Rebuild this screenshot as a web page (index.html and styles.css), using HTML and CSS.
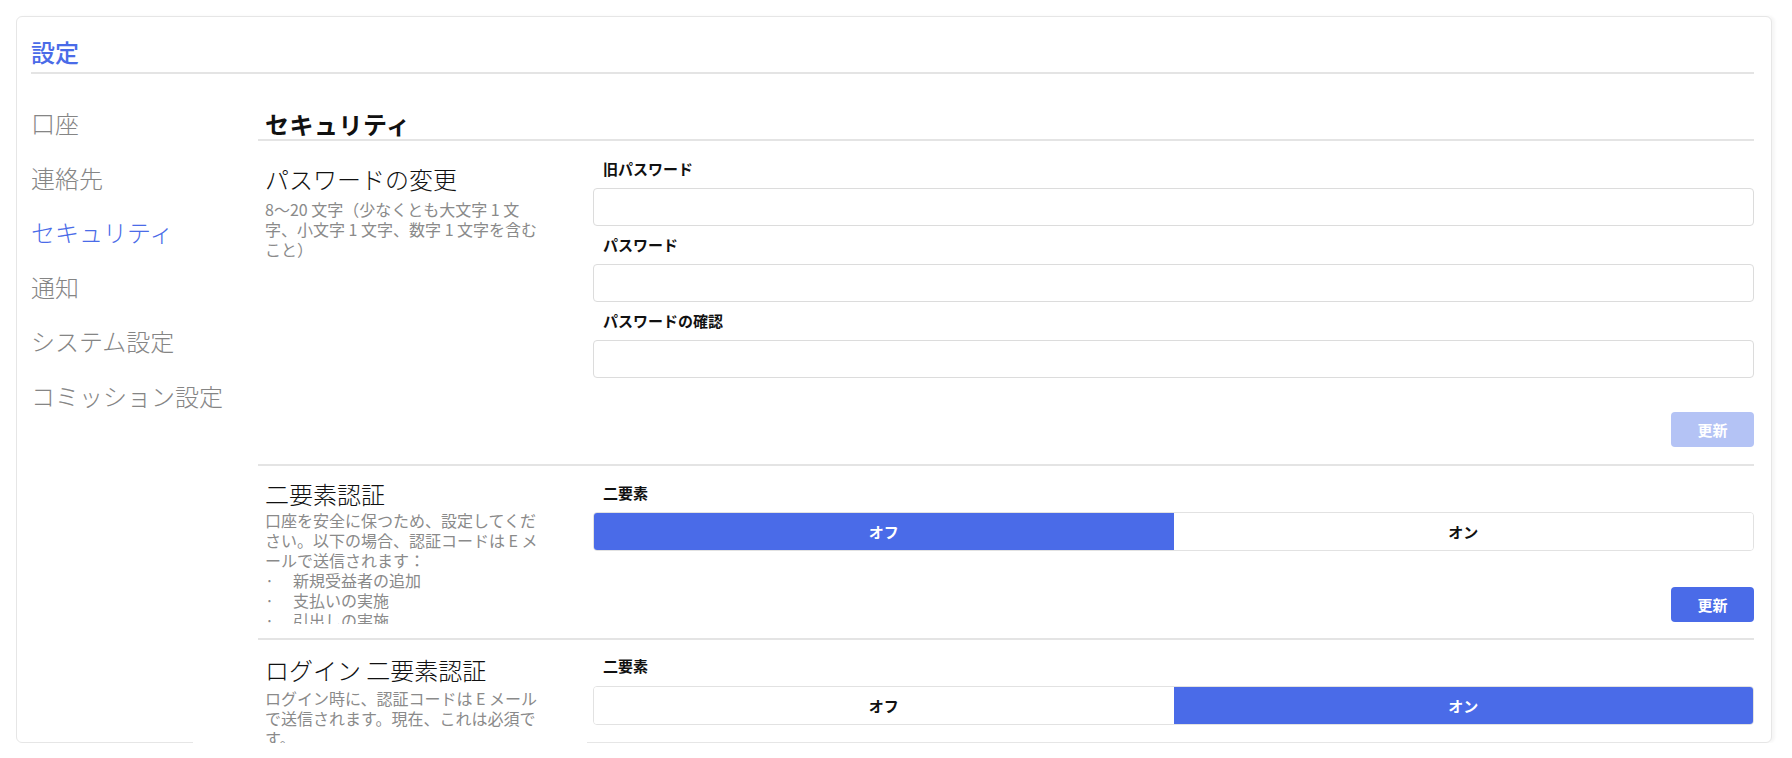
FILE: index.html
```html
<!DOCTYPE html>
<html lang="ja">
<head>
<meta charset="utf-8">
<title>設定</title>
<link rel="stylesheet" href="styles.css">
</head>
<body>
<div class="card">
  <h1 class="page-title">設定</h1>
  <div class="layout">
    <nav class="sidenav">
      <a class="nav-item">口座</a>
      <a class="nav-item">連絡先</a>
      <a class="nav-item is-active">セキュリティ</a>
      <a class="nav-item">通知</a>
      <a class="nav-item">システム設定</a>
      <a class="nav-item">コミッション設定</a>
    </nav>
    <main class="content">
      <h2 class="content-title">セキュリティ</h2>

      <section class="sec sec-pw">
        <div class="info">
          <h3 class="sec-title">パスワードの変更</h3>
          <p class="desc">8〜20 文字（少なくとも大文字 1 文<br>字、小文字 1 文字、数字 1 文字を含む<br>こと）</p>
        </div>
        <div class="form">
          <label class="field-label">旧パスワード</label>
          <input class="field" type="password">
          <label class="field-label">パスワード</label>
          <input class="field" type="password">
          <label class="field-label">パスワードの確認</label>
          <input class="field" type="password">
          <div class="actions"><button class="btn btn-disabled">更新</button></div>
        </div>
      </section>

      <section class="sec sec-2fa">
        <div class="info">
          <h3 class="sec-title">二要素認証</h3>
          <div class="desc desc-clip">
            口座を安全に保つため、設定してくだ<br>さい。以下の場合、認証コードは E メ<br>ールで送信されます：
            <div class="bullet"><span class="dot">·</span>新規受益者の追加</div>
            <div class="bullet"><span class="dot">·</span>支払いの実施</div>
            <div class="bullet"><span class="dot">·</span>引出しの実施</div>
          </div>
        </div>
        <div class="form">
          <label class="field-label">二要素</label>
          <div class="toggle">
            <span class="opt is-on">オフ</span>
            <span class="opt">オン</span>
          </div>
          <div class="actions actions-2fa"><button class="btn">更新</button></div>
        </div>
      </section>

      <section class="sec sec-login">
        <div class="info">
          <h3 class="sec-title">ログイン 二要素認証</h3>
          <p class="desc">ログイン時に、認証コードは E メール<br>で送信されます。現在、これは必須で<br>す。</p>
        </div>
        <div class="form">
          <label class="field-label">二要素</label>
          <div class="toggle">
            <span class="opt">オフ</span>
            <span class="opt is-on">オン</span>
          </div>
        </div>
      </section>
    </main>
  </div>
  <div class="border-cover"></div>
</div>
</body>
</html>
```

FILE: styles.css
```css
* { box-sizing: border-box; }

html, body {
  margin: 0;
  padding: 0;
  background: #ffffff;
  font-family: "Noto Sans CJK JP", "Noto Sans", sans-serif;
  color: #111111;
}

.card {
  position: relative;
  z-index: 0;
  margin: 16px 20px 0 16px;
  height: 727px;
  border: 1px solid #e6e6e6;
  border-radius: 6px;
  box-shadow: 3px 0 3px rgba(0, 0, 0, 0.04);
  padding: 19px 17px 0 14px;
  background: #ffffff;
}

.border-cover {
  position: absolute;
  z-index: -1;
  left: 176px;
  width: 394px;
  bottom: -2px;
  height: 3px;
  background: #ffffff;
}

.page-title {
  margin: 0;
  font-size: 24px;
  line-height: 32px;
  font-weight: 500;
  color: #4a6be8;
  padding-bottom: 4px;
  border-bottom: 2px solid #e4e4e4;
}

.layout {
  display: flex;
}

.sidenav {
  width: 227px;
  flex: none;
  padding-top: 22px;
  display: flex;
  flex-direction: column;
}

.nav-item {
  font-size: 24px;
  font-weight: 300;
  line-height: 54.6px;
  height: 54.6px;
  color: #858585;
  white-space: nowrap;
}

.nav-item.is-active {
  color: #4a6be8;
}

.content {
  flex: 1;
  min-width: 0;
}

.content-title {
  margin: 0;
  padding: 35px 0 0 7px;
  font-size: 24px;
  line-height: 30px;
  font-weight: 700;
  color: #111111;
  letter-spacing: 0.5px;
  border-bottom: 2px solid #e4e4e4;
}

.sec {
  display: flex;
  border-bottom: 2px solid #e4e4e4;
}

.sec-login {
  border-bottom: none;
}

.info {
  width: 335px;
  flex: none;
  padding-left: 7px;
}

.sec-title {
  margin: 0;
  font-size: 24px;
  line-height: 30px;
  font-weight: 300;
  color: #111111;
  white-space: nowrap;
}

.desc {
  margin: 5px 0 0;
  font-size: 16px;
  line-height: 20px;
  color: #8a8a8a;
  white-space: nowrap;
}

.desc-clip {
  max-height: 114px;
  overflow: hidden;
  margin-top: 1px;
}

.bullet .dot {
  display: inline-block;
  width: 28px;
}

.sec-pw .info { padding-top: 23px; }
.sec-2fa .info { padding-top: 13px; }
.sec-login .info { padding-top: 15px; }
.sec-login .desc { margin-top: 3px; }

.form {
  flex: 1;
  display: flex;
  flex-direction: column;
}

.sec-pw .form { padding: 17px 0 17px; }
.sec-2fa .form { padding: 16px 0 16px; }
.sec-login .form { padding: 15px 0 0; }

.field-label {
  display: block;
  padding-left: 10px;
  font-size: 15px;
  line-height: 22px;
  font-weight: 700;
  color: #111111;
  margin-bottom: 8px;
}

.field {
  display: block;
  width: 100%;
  height: 38px;
  border: 1px solid #dcdcdc;
  border-radius: 4px;
  background: #ffffff;
  margin: 0 0 8px;
  padding: 0 10px;
  font: inherit;
}

.field:last-of-type {
  margin-bottom: 0;
}

.actions {
  display: flex;
  justify-content: flex-end;
  margin-top: 34px;
}

.actions-2fa {
  margin-top: 36px;
}

.btn {
  width: 83px;
  height: 35px;
  border: none;
  border-radius: 4px;
  background: #4a6be8;
  color: #ffffff;
  font-family: inherit;
  font-size: 15px;
  font-weight: 700;
  padding: 0;
}

.btn-disabled {
  background: #b4c3f5;
}

.toggle {
  display: grid;
  grid-template-columns: 1fr 1fr;
  height: 39px;
  border: 1px solid #e2e2e2;
  border-radius: 4px;
  overflow: hidden;
}

.sec-login .toggle {
  margin-top: 1px;
}

.opt {
  display: flex;
  align-items: center;
  justify-content: center;
  font-size: 15px;
  font-weight: 700;
  color: #111111;
  background: #ffffff;
}

.opt.is-on {
  background: #4a6be8;
  color: #ffffff;
}
```
